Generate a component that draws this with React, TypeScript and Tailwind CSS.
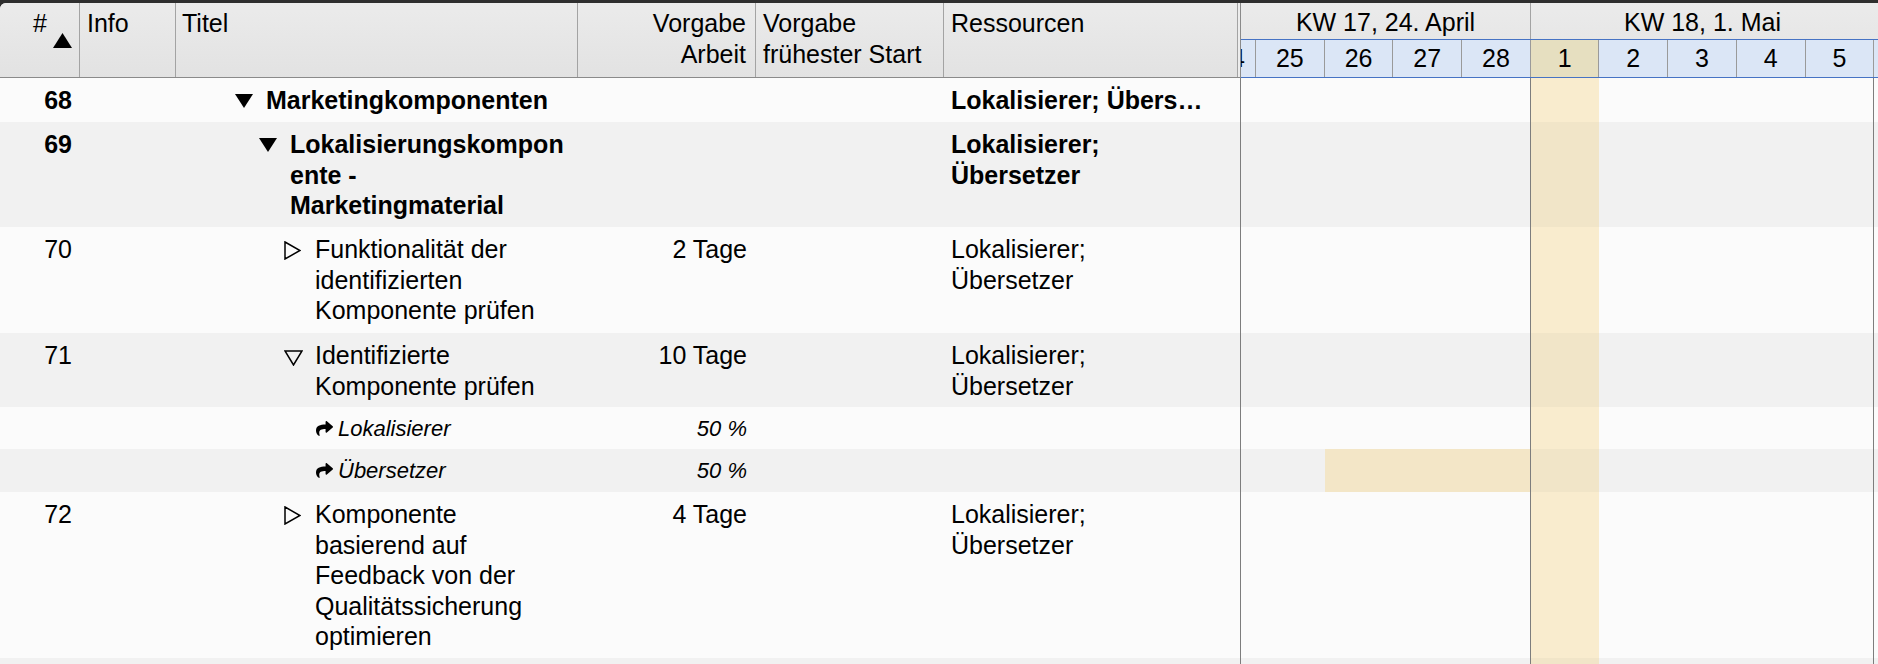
import React from "react";
import { FaShare } from "react-icons/fa";

type Row = {
  num?: string;
  bold?: boolean;
  kind: "down" | "open" | "closed" | "assign";
  indent: string;
  title: string;
  work?: string;
  res?: string;
  h: string;
  gray: boolean;
  bar?: boolean;
  truncate?: boolean;
};

const ROWS: Row[] = [
  { num: "68", bold: true, kind: "down", indent: "pl-[59px]", title: "Marketingkomponenten", res: "Lokalisierer; Übersetzer", h: "h-[44px]", gray: false, truncate: true },
  { num: "69", bold: true, kind: "down", indent: "pl-[83px]", title: "Lokalisierungskomponente - Marketingmaterial", res: "Lokalisierer; Übersetzer", h: "h-[105px]", gray: true },
  { num: "70", kind: "closed", indent: "pl-[108px]", title: "Funktionalität der identifizierten Komponente prüfen", work: "2 Tage", res: "Lokalisierer; Übersetzer", h: "h-[106px]", gray: false },
  { num: "71", kind: "open", indent: "pl-[108px]", title: "Identifizierte Komponente prüfen", work: "10 Tage", res: "Lokalisierer; Übersetzer", h: "h-[74px]", gray: true },
  { kind: "assign", indent: "pl-[140px]", title: "Lokalisierer", work: "50 %", h: "h-[42px]", gray: false },
  { kind: "assign", indent: "pl-[140px]", title: "Übersetzer", work: "50 %", h: "h-[43px]", gray: true, bar: true },
  { num: "72", kind: "closed", indent: "pl-[108px]", title: "Komponente basierend auf Feedback von der Qualitätssicherung optimieren", work: "4 Tage", res: "Lokalisierer; Übersetzer", h: "h-[166px]", gray: false },
];

const DAYS = ["25", "26", "27", "28", "1", "2", "3", "4", "5"];

function Toggle({ kind }: { kind: Row["kind"] }) {
  if (kind === "down")
    return (
      <svg width="18" height="14" viewBox="0 0 18 14" className="mt-[9px]">
        <polygon points="0,0 18,0 9,14" fill="#000" />
      </svg>
    );
  if (kind === "closed")
    return (
      <svg width="17" height="19" viewBox="0 0 17 19" className="mt-[7px]">
        <polygon points="1,1 16,9.5 1,18" fill="none" stroke="#000" strokeWidth="1.5" strokeLinejoin="miter" />
      </svg>
    );
  return (
    <svg width="19" height="16" viewBox="0 0 19 16" className="mt-[10px]">
      <polygon points="1,1 18,1 9.5,15" fill="none" stroke="#000" strokeWidth="1.5" strokeLinejoin="miter" />
    </svg>
  );
}

function GanttCells({ row }: { row: Row }) {
  const base = row.gray ? "bg-[#f1f1f1]" : "bg-[#fbfbfb]";
  return (
    <div className="flex flex-1 border-l border-[#7d7d7d]">
      <div className={`w-[15px] ${base}`} />
      {DAYS.map((d, i) => {
        let bg = base;
        if (d === "1") bg = row.gray ? "bg-[#f1e5c8]" : "bg-[#f9ecce]";
        else if (row.bar && (d === "26" || d === "27" || d === "28")) bg = "bg-[#f3e6c7]";
        const edge = i === 3 || i === 8 ? "border-r border-[#7d7d7d]" : "";
        return <div key={d} className={`w-[68.7px] shrink-0 ${bg} ${edge}`} />;
      })}
      <div className={`flex-1 ${base}`} />
    </div>
  );
}

function BodyRow({ row }: { row: Row }) {
  const bg = row.gray ? "bg-[#f1f1f1]" : "bg-[#fbfbfb]";
  const weight = row.bold ? "font-bold" : "font-normal";
  const assign = row.kind === "assign";
  return (
    <div className={`flex shrink-0 ${row.h} ${bg}`}>
      <div className={`flex w-[1240px] shrink-0 ${assign ? "items-center" : "pt-[7px]"}`}>
        <div className={`w-[80px] shrink-0 pr-[8px] text-right ${weight}`}>{row.num}</div>
        <div className="w-[96px] shrink-0" />
        <div className={`flex w-[402px] shrink-0 pr-[8px] ${row.indent}`}>
          {assign ? (
            <>
              <div className="flex w-[22px] shrink-0 items-center">
                <FaShare size={17} />
              </div>
              <div className="text-[22px] leading-[29px] italic">{row.title}</div>
            </>
          ) : (
            <>
              <div className="w-[31px] shrink-0">
                <Toggle kind={row.kind} />
              </div>
              <div className={`min-w-0 flex-1 break-words ${weight}`}>{row.title}</div>
            </>
          )}
        </div>
        <div
          className={`w-[178px] shrink-0 pr-[9px] text-right ${
            assign ? "text-[22px] leading-[29px] italic" : weight
          }`}
        >
          {row.work}
        </div>
        <div className="w-[188px] shrink-0" />
        <div className="w-[294px] shrink-0 pl-[7px]">
          {row.res && (
            <div className={`w-[258px] ${weight} ${row.truncate ? "truncate" : ""}`}>{row.res}</div>
          )}
        </div>
      </div>
      <GanttCells row={row} />
    </div>
  );
}

function Header() {
  const cell = "shrink-0 border-r border-[#a3a3a3] pt-[5px]";
  return (
    <div className="flex h-[75px] shrink-0 bg-linear-to-b from-[#ebebeb] to-[#e2e2e2]">
      <div className="flex w-[1240px] shrink-0 border-b border-[#8a8a8a]">
        <div className={`relative w-[80px] pl-[33px] ${cell}`}>
          #
          <svg width="19" height="15" viewBox="0 0 19 15" className="absolute top-[30px] left-[53px]">
            <polygon points="9.5,0 19,15 0,15" fill="#000" />
          </svg>
        </div>
        <div className={`w-[96px] pl-[7px] ${cell}`}>Info</div>
        <div className={`w-[402px] pl-[6px] ${cell}`}>Titel</div>
        <div className={`w-[178px] pr-[9px] text-right ${cell}`}>
          Vorgabe
          <br />
          Arbeit
        </div>
        <div className={`w-[188px] pl-[7px] ${cell}`}>
          Vorgabe
          <br />
          frühester Start
        </div>
        <div className={`w-[294px] pl-[7px] ${cell}`}>Ressourcen</div>
        <div className="w-[2px] shrink-0 bg-[#ededed]" />
      </div>
      <div className="flex flex-1 flex-col border-l border-[#8a8a8a]">
        <div className="flex h-[36px] shrink-0">
          <div className="w-[290px] shrink-0 border-r border-[#a3a3a3] pt-[4px] text-center">KW 17, 24. April</div>
          <div className="flex-1 pt-[4px] pr-[4px] text-center">KW 18, 1. Mai</div>
        </div>
        <div className="flex h-[39px] shrink-0 border-y border-[#4673c4] bg-[#dbe6f6]">
          <div className="flex w-[15px] shrink-0 items-center justify-end overflow-hidden border-r border-[#9a9a9a]">
            <span className="mr-[10px] shrink-0">24</span>
          </div>
          {DAYS.map((d) => (
            <div
              key={d}
              className={`flex w-[68.7px] shrink-0 items-center justify-center border-r border-[#9a9a9a] ${
                d === "1" ? "bg-[#e6dfc0]" : ""
              }`}
            >
              {d}
            </div>
          ))}
          <div className="flex-1" />
        </div>
      </div>
    </div>
  );
}

export default function App() {
  return (
    <div className="flex h-[664px] w-[1878px] flex-col overflow-hidden bg-[#2e2e2e] pt-[3px] font-['Liberation_Sans',Arial,sans-serif] text-[25px] leading-[30.5px] text-black">
      <div className="flex flex-1 flex-col overflow-hidden rounded-tl-[6px] bg-[#f1f1f1]">
        <Header />
        {ROWS.map((r, i) => (
          <BodyRow key={i} row={r} />
        ))}
        <div className="flex flex-1">
          <div className="w-[1240px] shrink-0" />
          <GanttCells row={{ kind: "open", indent: "", title: "", h: "", gray: true }} />
        </div>
      </div>
    </div>
  );
}
